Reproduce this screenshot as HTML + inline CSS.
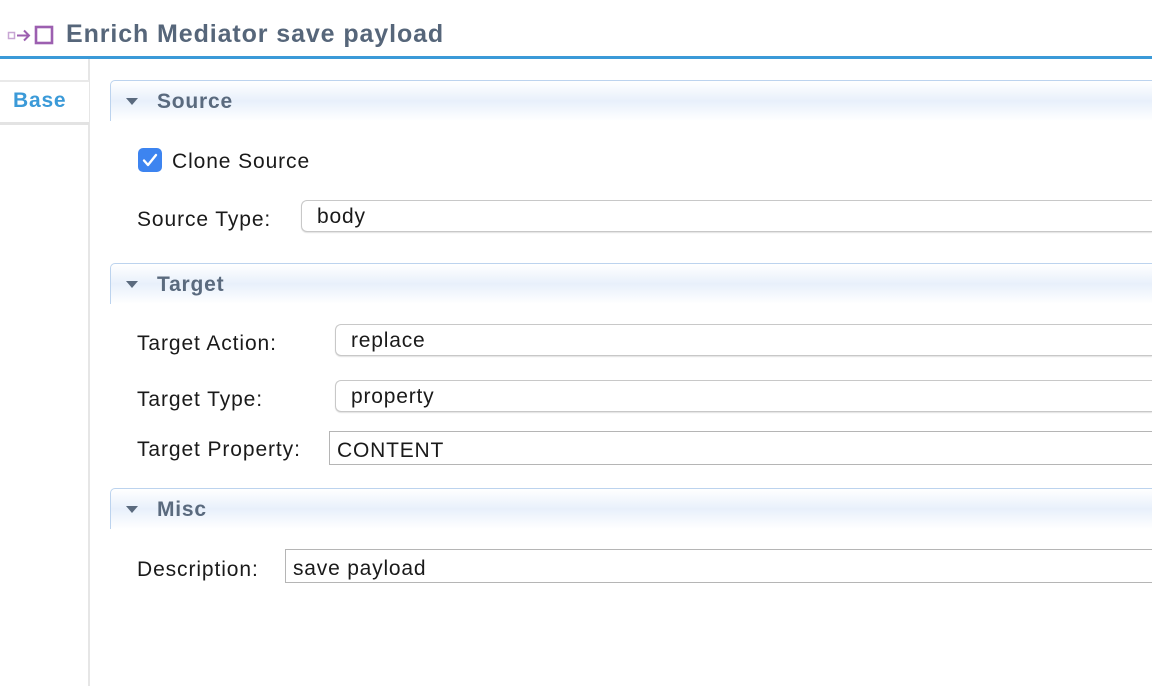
<!DOCTYPE html>
<html><head><style>
body{margin:0;width:1152px;height:686px;background:#fff;font-family:"Liberation Sans",Arial,sans-serif;position:relative;overflow:hidden;color:#1a1a1a}
.a{position:absolute}
.title{left:66px;top:20px;font-size:25px;font-weight:bold;color:#56667a;letter-spacing:0.9px}
.hdr{left:110px;width:1050px;height:40px;border:1px solid #bcd3ee;border-right:none;border-bottom:none;border-radius:5px 0 0 0;background:linear-gradient(#ffffff 0%,#e8f0fb 50%,#ffffff 100%)}
.hdr span{position:absolute;left:46px;top:9px;font-size:21px;font-weight:bold;color:#5a6a7e;letter-spacing:0.8px}
.hdr i{position:absolute;left:15px;top:17px;width:0;height:0;border-left:6px solid transparent;border-right:6px solid transparent;border-top:7px solid #5a6a7e}
.lbl{font-size:21px;color:#1a1a1a;letter-spacing:0.9px}
.combo{height:32px;border:1px solid #c8c8c8;border-right:none;border-radius:6px 0 0 6px;box-shadow:0 1px 1px rgba(0,0,0,.12);background:#fff;font-size:21px;line-height:31px;padding-left:15px;box-sizing:border-box;right:0;letter-spacing:0.8px}
.txt{height:34px;border:1px solid #b5b5b5;border-right:none;background:#fff;font-size:21px;line-height:37px;padding-left:7px;box-sizing:border-box;right:0;letter-spacing:0.8px}
</style></head><body>
<svg class="a" style="left:7px;top:24px" width="50" height="22" viewBox="0 0 50 22">
<rect x="1.5" y="8.5" width="6" height="6" fill="none" stroke="#c8a6d4" stroke-width="1.5"/>
<path d="M10 11.5h12M17 6.5l5 5-5 5" fill="none" stroke="#9c5fb0" stroke-width="2"/>
<rect x="29" y="3" width="16" height="16" fill="none" stroke="#9c5fb0" stroke-width="2.6"/>
</svg>
<div class="a title">Enrich Mediator save payload</div>
<div class="a" style="left:0;top:56px;width:1152px;height:3px;background:#3b9ad8"></div>
<div class="a" style="left:88px;top:59px;width:2px;height:627px;background:#e6e6e6"></div>
<div class="a" style="left:0;top:80px;width:89px;height:40px;background:#fff;border-top:2px solid #e9e9e9;border-bottom:3px solid #e3e3e3"></div>
<div class="a" style="left:13px;top:89px;font-size:21px;font-weight:bold;color:#3b9ad8;letter-spacing:0.8px">Base</div>

<div class="a hdr" style="top:80px"><i></i><span>Source</span></div>
<div class="a" style="left:138px;top:148px;width:24px;height:24px;border-radius:5px;background:#3d84f0"></div>
<svg class="a" style="left:138px;top:148px" width="24" height="24"><path d="M6 12.5l4 4.5 8-10" fill="none" stroke="#fff" stroke-width="2.4" stroke-linecap="round" stroke-linejoin="round"/></svg>
<div class="a lbl" style="left:172px;top:150px">Clone Source</div>
<div class="a lbl" style="left:137px;top:208px">Source Type:</div>
<div class="a combo" style="left:301px;top:200px">body</div>

<div class="a hdr" style="top:263px"><i></i><span>Target</span></div>
<div class="a lbl" style="left:137px;top:332px">Target Action:</div>
<div class="a combo" style="left:335px;top:324px">replace</div>
<div class="a lbl" style="left:137px;top:388px">Target Type:</div>
<div class="a combo" style="left:335px;top:380px">property</div>
<div class="a lbl" style="left:137px;top:438px">Target Property:</div>
<div class="a txt" style="left:329px;top:431px">CONTENT</div>

<div class="a hdr" style="top:488px"><i></i><span>Misc</span></div>
<div class="a lbl" style="left:137px;top:558px">Description:</div>
<div class="a txt" style="left:285px;top:549px">save payload</div>
</body></html>
